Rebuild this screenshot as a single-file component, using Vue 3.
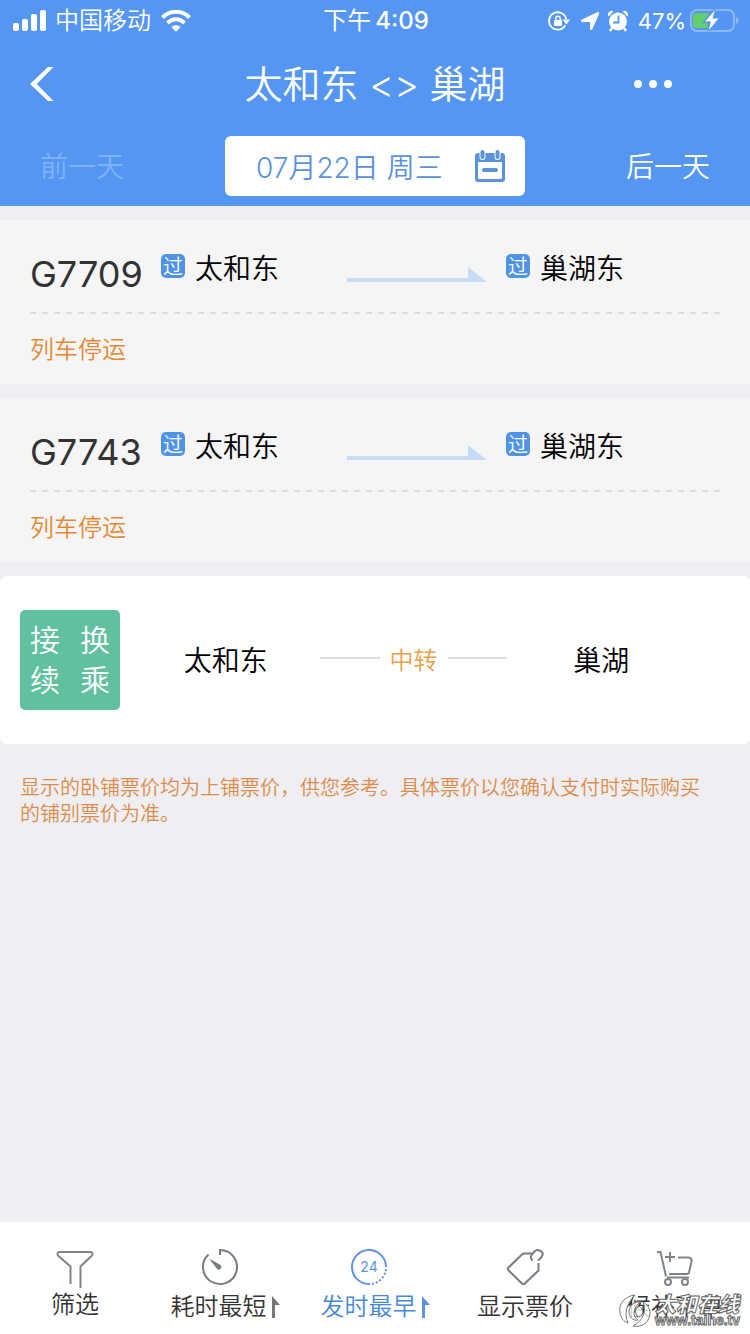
<script setup>
const trains = [
  { no: 'G7709', from: '太和东', to: '巢湖东', state: '列车停运' },
  { no: 'G7743', from: '太和东', to: '巢湖东', state: '列车停运' },
]
</script>

<template>
  <div class="page">
    <header class="top">
      <div class="status">
        <div class="status-side">
          <svg class="signal" width="34" height="22" viewBox="0 0 34 22" fill="#fff">
            <rect x="0" y="13" width="6" height="8" rx="2" />
            <rect x="9" y="9" width="6" height="12" rx="2" />
            <rect x="18" y="4" width="6" height="17" rx="2" />
            <rect x="27" y="0" width="6" height="21" rx="2" />
          </svg>
          <span>中国移动</span>
          <svg class="wifi" width="30" height="22" viewBox="0 0 30 22" fill="none" stroke="#fff" stroke-width="4">
            <path d="M1.500 7.500C9-.1 21-.1 28.500 7.500" />
            <path d="M6.500 13C11.500 8 18.500 8 23.500 13" />
            <path d="M10.300 17C13 14.600 17 14.600 19.700 17L15 21.800Z" fill="#fff" stroke="none" />
          </svg>
        </div>
        <div class="time"><span>下午</span><b>4:09</b></div>
        <div class="status-side end">
          <svg width="22" height="20" viewBox="0 0 22 20" fill="none" stroke="#fff" stroke-width="1.800">
            <path d="M18.200 8A8.700 8.700 0 1 0 17.300 14.300" />
            <path d="M14.500 8.500h7.500l-3.600 5z" fill="#fff" stroke="none" />
            <rect x="6" y="9" width="8" height="6" rx="1" fill="#fff" stroke="none" />
            <path d="M7.800 9.500V7.400a2.200 2.200 0 0 1 4.400 0V9.500" stroke-width="1.500" />
          </svg>
          <svg class="loc" width="20" height="20" viewBox="0 0 20 20" fill="#fff">
            <path d="M17.300 1.200C18.700.6 19.700 1.500 19 3L12.500 18c-.6 1.400-2.500 1.100-2.500-.6V11H2.500c-1.900 0-2.200-1.800-.6-2.500z" />
          </svg>
          <svg class="alarm" width="20" height="22" viewBox="0 0 20 22">
            <circle cx="10" cy="11.500" r="9" fill="#fff" />
            <path d="M.8 6.500A3.600 3.600 0 0 1 5.400 1.200zM19.200 6.500A3.600 3.600 0 0 0 14.600 1.200z" fill="#fff" />
            <path d="M4 18l-2 3M16 18l2 3" stroke="#fff" stroke-width="2.500" />
            <path d="M10.500 5.500v7H5" fill="none" stroke="#5596f2" stroke-width="1.800" />
          </svg>
          <span class="pct">47%</span>
          <svg class="battery" width="49" height="24" viewBox="0 0 49 24">
            <rect x="1" y="1" width="43" height="21" rx="6" fill="none" stroke="#8cb8f8" stroke-width="2" />
            <path d="M46 8v7c2-.6 2.800-2 2.800-3.500S48 8.600 46 8z" fill="#8cb8f8" />
            <path d="M6 4h12v15H6a3 3 0 0 1-3-3V7a3 3 0 0 1 3-3z" fill="#63cf6b" />
            <path d="M25 1L15 12.500h6l-2.500 9L28.500 9.500h-6z" fill="#fff" stroke="#5596f2" stroke-width="3" paint-order="stroke" />
          </svg>
        </div>
      </div>

      <nav class="nav">
        <button class="back" aria-label="返回">
          <svg width="26" height="36" viewBox="0 0 26 36" fill="#fff">
            <path d="M18 1h5.500L6.800 18 23.500 35H18L0 18z" />
          </svg>
        </button>
        <h1>太和东 &lt;&gt; 巢湖</h1>
        <button class="more" aria-label="更多">
          <svg width="38" height="10" viewBox="0 0 38 10" fill="#fff">
            <circle cx="4" cy="5" r="4" /><circle cx="19" cy="5" r="4" /><circle cx="34" cy="5" r="4" />
          </svg>
        </button>
      </nav>

      <div class="days">
        <button class="day prev" disabled>前一天</button>
        <button class="date">
          <span>07月22日 周三</span>
          <svg width="30" height="32" viewBox="0 -2 30 32">
            <path d="M3 1h24a3 3 0 0 1 3 3v23a3 3 0 0 1-3 3H3a3 3 0 0 1-3-3V4a3 3 0 0 1 3-3zM3 10v15.500A1.500 1.500 0 0 0 4.500 27h21a1.500 1.500 0 0 0 1.500-1.500V10z" fill="#5b92de" fill-rule="evenodd" />
            <path d="M7.500 1v4M22.500 1v4" stroke="#fff" stroke-width="6" stroke-linecap="round" />
            <path d="M7.500 0v5M22.500 0v5" stroke="#5b92de" stroke-width="4" stroke-linecap="round" />
            <path d="M9 18h12" stroke="#5b92de" stroke-width="4" stroke-linecap="round" />
          </svg>
        </button>
        <button class="day next">后一天</button>
      </div>
    </header>

    <main>
      <article v-for="t in trains" :key="t.no" class="train">
        <div class="route">
          <span class="no">{{ t.no }}</span>
          <span class="stop"><i class="via">过</i>{{ t.from }}</span>
          <svg class="arrow" width="140" height="16" viewBox="0 0 140 16">
            <path d="M0 11h122V15H0z" fill="#c8dbf7" />
            <path d="M121 0l19 15h-19z" fill="#c5dcf9" />
          </svg>
          <span class="stop"><i class="via">过</i>{{ t.to }}</span>
        </div>
        <div class="dash"></div>
        <p class="state">{{ t.state }}</p>
      </article>

      <article class="transfer">
        <div class="badge"><span>接</span><span>换</span><span>续</span><span>乘</span></div>
        <div class="legs">
          <span>太和东</span>
          <span class="mid">中转</span>
          <span>巢湖</span>
        </div>
      </article>

      <p class="notice">显示的卧铺票价均为上铺票价，供您参考。具体票价以您确认支付时实际购买的铺别票价为准。</p>
    </main>

    <footer class="tabs">
      <button class="tab filter">
        <svg width="38" height="38" viewBox="0 0 38 38" fill="none" stroke="#80848a" stroke-width="2">
          <path d="M14.500 34V16.500L2.500 6C1 4.500 1.200 2 3.500 2h31c2.300 0 2.500 2.500 1 4L24.500 16.500V38" />
        </svg>
        <span>筛选</span>
      </button>
      <button class="tab sort">
        <svg class="dial" width="38" height="38" viewBox="0 0 38 38" fill="none" stroke="#777c82" stroke-width="2">
          <path d="M20 7V2A17 17 0 1 1 8.500 6.500" />
          <path d="M9 10.500L20.500 17a2.500 2.500 0 1 1-3.500 3.800z" fill="#777c82" stroke="none" />
        </svg>
        <span class="sorted">耗时最短<svg width="8" height="22" viewBox="0 0 8 22" fill="#777"><path d="M0 0l8 9H3v13H0z" /></svg></span>
      </button>
      <button class="tab sort active">
        <svg class="dial" width="38" height="38" viewBox="0 0 38 38" fill="none" stroke="#5f92e6" stroke-width="2">
          <path d="M20 36A17 17 0 1 1 36 19" />
          <path d="M36 21A17 17 0 0 1 22 36" stroke-dasharray="2 2" />
          <text x="19" y="24" text-anchor="middle" class="hours">24</text>
        </svg>
        <span class="sorted">发时最早<svg width="8" height="22" viewBox="0 0 8 22" fill="#5b92e6"><path d="M0 0l8 9H3v13H0z" /></svg></span>
      </button>
      <button class="tab">
        <svg width="38" height="38" viewBox="0 0 38 38" fill="none" stroke="#777c82" stroke-width="2">
          <path d="M26 5.500H18.500a4 4 0 0 0-2.500 1L2.500 19.500a2 2 0 0 0 0 2.800L16 35.500a2 2 0 0 0 2.800 0L32.500 22.500V15" />
          <path d="M26.500 12.500C23 9 26 6 28.500 3.500c3-3 9-.5 8 3.500-.5 2.500-3 4-4.500 5.500" />
        </svg>
        <span>显示票价</span>
      </button>
      <button class="tab">
        <svg width="38" height="38" viewBox="0 0 38 38" fill="none" stroke="#80848a" stroke-width="2">
          <path d="M1 4h3.500L10 28.500M11 29.500h22M22 9.500h10.500a3 3 0 0 1 3 4L33 24.500a2 2 0 0 1-2 1.500H13M14 4v10M9 9h10" />
          <circle cx="12" cy="34" r="3" /><circle cx="29" cy="34" r="3" />
        </svg>
        <span>候补下单</span>
      </button>
    </footer>

    <svg class="mark" width="126" height="40" viewBox="0 0 126 40">
      <g fill="#fff" fill-opacity=".8" stroke="#777" stroke-width="1" stroke-linejoin="round">
        <path d="M16 3C6 4-1 12 1 21c1 5 4 9 8 10C5 22 7 12 16 3z" />
        <path d="M14 34c9 2 17-4 17-13 0-5-3-9-7-11 4 9 0 19-10 24z" />
        <path d="M22 10c-7-1-12 4-12 10 0 5 4 9 9 8-4-3-5-7-3-11 1-3 3-6 6-7z" />
        <path d="M20 14c-3 2-4 5-3 8s4 4 6 1c2-3 0-7-3-9z" />
      </g>
      <text x="36" y="20" class="mark-name">太和在线</text>
      <text x="36" y="33" class="mark-url">www.taihe.tv</text>
    </svg>
  </div>
</template>

<style>
body {
  margin: 0;
  background: #eeeef3;
}
</style>

<style scoped>
.page {
  position: relative;
  display: flex;
  flex-direction: column;
  min-height: 100vh;
  background: #eeeef3;
  color: #000;
  font-family: Inter, "Noto Sans CJK SC", sans-serif;
  font-size: 28px;
  font-weight: 350;
}
button {
  padding: 0;
  border: 0;
  background: none;
  color: inherit;
  font: inherit;
}
svg {
  display: block;
  flex: none;
}
.top {
  background: #5596f2;
  color: #fff;
}
.status {
  display: grid;
  grid-template-columns: 1fr auto 1fr;
  align-items: center;
  height: 40px;
  padding: 0 11px 0 13px;
  font-size: 24px;
  line-height: 40px;
}
.status-side {
  display: flex;
  align-items: center;
}
.status-side span,
.time {
  padding-top: 1px;
}
.end {
  justify-content: flex-end;
}
.signal {
  margin-right: 8px;
}
.wifi {
  margin-left: 10px;
}
.time {
  display: flex;
  gap: 4px;
  font-weight: 400;
}
.time b {
  font-weight: 500;
}
.loc {
  margin-left: 10px;
}
.alarm {
  margin: 0 10px 0 8px;
}
.pct {
  font-size: 22px;
  font-weight: 400;
}
.battery {
  margin-left: 4px;
}
.nav {
  display: grid;
  grid-template-columns: 1fr auto 1fr;
  align-items: center;
  height: 88px;
  padding: 0 30px;
}
.back {
  justify-self: start;
}
.more {
  justify-self: end;
  margin-right: 48px;
}
h1 {
  margin: 0;
  font-size: 38px;
  font-weight: inherit;
  line-height: 88px;
}
.days {
  display: grid;
  grid-template-columns: 1fr 300px 1fr;
  align-items: center;
  padding: 8px 40px 10px;
}
.day {
  padding-top: 2px;
  line-height: 58px;
}
.prev {
  justify-self: start;
  color: #80b2fa;
}
.next {
  justify-self: end;
}
.date {
  display: flex;
  align-items: center;
  justify-content: space-between;
  height: 60px;
  padding: 0 20px 0 31px;
  border-radius: 6px;
  background: #fff;
  color: #5b92de;
}
main {
  display: flex;
  flex: 1;
  flex-direction: column;
  gap: 14px;
  padding-top: 14px;
}
.train {
  padding: 0 30px;
  background: #f5f5f5;
}
.route {
  display: grid;
  grid-template-columns: 131fr 186fr 159fr 214fr;
  height: 92px;
}
.no {
  padding-top: 28px;
  color: #333;
  font-size: 36px;
  font-weight: 400;
  line-height: 52px;
}
.stop {
  display: flex;
  gap: 10px;
  padding-top: 29px;
  line-height: 40px;
}
.via {
  width: 24px;
  height: 24px;
  margin-top: 5px;
  border-radius: 5px;
  background: #4f93e8;
  color: #fff;
  font-size: 20px;
  font-style: normal;
  line-height: 26px;
  text-align: center;
}
.arrow {
  margin-top: 47px;
}
.dash {
  height: 2px;
  background: repeating-linear-gradient(90deg, #dcdcdc 0 6px, transparent 6px 12px);
}
.state {
  margin: 0;
  padding-top: 2px;
  color: #e48836;
  font-size: 24px;
  line-height: 68px;
}
.transfer {
  display: flex;
  align-items: center;
  gap: 12px;
  padding: 34px 55px 34px 20px;
  border-radius: 6px;
  background: #fff;
}
.badge {
  display: grid;
  grid-template-columns: 1fr 1fr;
  align-content: center;
  flex: none;
  width: 100px;
  height: 100px;
  border-radius: 5px;
  background: #61c09f;
  color: #fff;
  font-size: 30px;
  line-height: 40px;
  text-align: center;
}
.legs {
  display: grid;
  flex: 1;
  grid-template-columns: 1fr 1fr 1fr;
  padding-top: 2px;
  line-height: 40px;
  text-align: center;
}
.mid {
  display: flex;
  align-items: center;
  gap: 10px;
  color: #eda047;
  font-size: 24px;
}
.mid::before,
.mid::after {
  flex: 1;
  height: 2px;
  margin-bottom: 6px;
  background: #dedede;
  content: "";
}
.notice {
  margin: 17px 40px 0 20px;
  color: #dc8c48;
  font-size: 20px;
  line-height: 26px;
}
.tabs {
  display: grid;
  grid-template-columns: repeat(5, 1fr);
  height: 112px;
  background: #fff;
  color: #333;
  font-size: 24px;
}
.tab {
  display: flex;
  flex-direction: column;
  align-items: center;
  padding-top: 26px;
  line-height: 42px;
}
.filter {
  padding-top: 28px;
  line-height: 34px;
}
.dial {
  margin-right: 13px;
}
.sorted {
  display: flex;
  align-items: center;
  gap: 5px;
}
.active {
  color: #4688d8;
}
.hours {
  fill: #5f92e6;
  stroke: none;
  font-size: 14px;
  font-weight: 400;
}
.mark {
  position: absolute;
  right: 5px;
  bottom: 2px;
  pointer-events: none;
}
.mark text {
  fill: #fff;
  stroke: #666;
  stroke-width: 1px;
}
.mark-name {
  font-size: 21px;
  font-style: italic;
  font-weight: 900;
}
.mark-url {
  font-family: "Liberation Sans", sans-serif;
  font-size: 14px;
  font-weight: 700;
}
</style>
